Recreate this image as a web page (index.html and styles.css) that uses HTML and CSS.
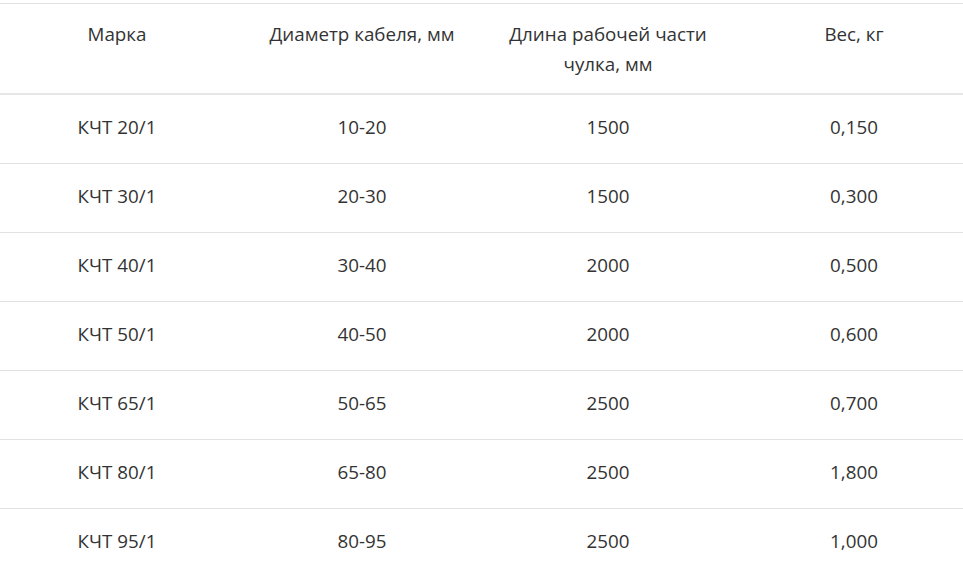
FILE: index.html
```html
<!DOCTYPE html>
<html lang="ru">
<head>
<meta charset="utf-8">
<title>Таблица</title>
<link rel="stylesheet" href="styles.css">
</head>
<body>
<table class="spec">
  <colgroup>
    <col class="c1"><col class="c2"><col class="c3"><col class="c4">
  </colgroup>
  <thead>
    <tr><th>Марка</th><th>Диаметр кабеля, мм</th><th>Длина рабочей части чулка, мм</th><th>Вес, кг</th></tr>
  </thead>
  <tbody>
    <tr><td>КЧТ 20/1</td><td>10-20</td><td>1500</td><td>0,150</td></tr>
    <tr><td>КЧТ 30/1</td><td>20-30</td><td>1500</td><td>0,300</td></tr>
    <tr><td>КЧТ 40/1</td><td>30-40</td><td>2000</td><td>0,500</td></tr>
    <tr><td>КЧТ 50/1</td><td>40-50</td><td>2000</td><td>0,600</td></tr>
    <tr><td>КЧТ 65/1</td><td>50-65</td><td>2500</td><td>0,700</td></tr>
    <tr><td>КЧТ 80/1</td><td>65-80</td><td>2500</td><td>1,800</td></tr>
    <tr><td>КЧТ 95/1</td><td>80-95</td><td>2500</td><td>1,000</td></tr>
  </tbody>
</table>
</body>
</html>
```
FILE: styles.css
```css
html, body {
  margin: 0;
  padding: 0;
  background: #fff;
  overflow: hidden;
}
body {
  padding-top: 3px;
  font-family: "Open Sans", "Noto Sans", sans-serif;
  font-size: 18.8px;
  color: #333;
}
.spec {
  border-collapse: collapse;
  table-layout: fixed;
  width: 982px;
}
.c1 { width: 234px; }
.c2 { width: 256px; }
.c3 { width: 236px; }
.c4 { width: 256px; }
.spec th,
.spec td {
  text-align: center;
  vertical-align: top;
  line-height: 30px;
  border-top: 1px solid #e2e2e2;
}
.spec th {
  font-weight: 400;
  padding: 15px 8px 14px;
  border-bottom: 2px solid #e6e6e6;
}
.spec td {
  padding: 17px 8px 21px;
}
.spec thead + tbody tr:first-child td {
  border-top: 0;
}
```
